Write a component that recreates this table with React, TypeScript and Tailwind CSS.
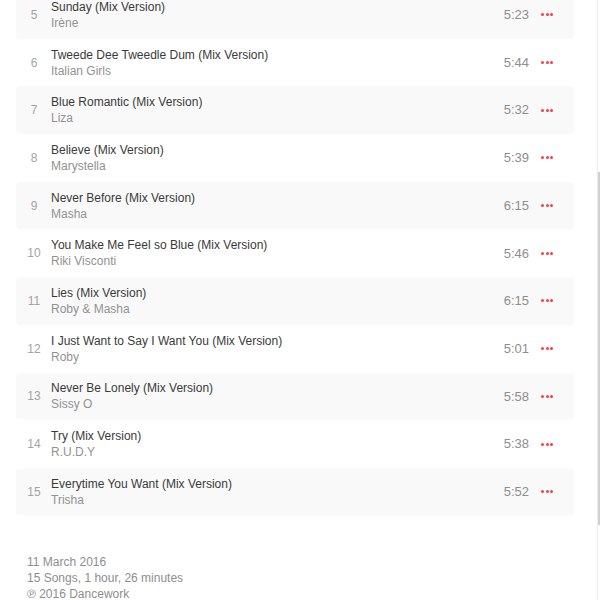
const tracks = [
	{ n: 5, title: "Sunday (Mix Version)", artist: "Irène", time: "5:23" },
	{ n: 6, title: "Tweede Dee Tweedle Dum (Mix Version)", artist: "Italian Girls", time: "5:44" },
	{ n: 7, title: "Blue Romantic (Mix Version)", artist: "Liza", time: "5:32" },
	{ n: 8, title: "Believe (Mix Version)", artist: "Marystella", time: "5:39" },
	{ n: 9, title: "Never Before (Mix Version)", artist: "Masha", time: "6:15" },
	{ n: 10, title: "You Make Me Feel so Blue (Mix Version)", artist: "Riki Visconti", time: "5:46" },
	{ n: 11, title: "Lies (Mix Version)", artist: "Roby & Masha", time: "6:15" },
	{ n: 12, title: "I Just Want to Say I Want You (Mix Version)", artist: "Roby", time: "5:01" },
	{ n: 13, title: "Never Be Lonely (Mix Version)", artist: "Sissy O", time: "5:58" },
	{ n: 14, title: "Try (Mix Version)", artist: "R.U.D.Y", time: "5:38" },
	{ n: 15, title: "Everytime You Want (Mix Version)", artist: "Trisha", time: "5:52" },
]

function Dots() {
	return (
		<div className="flex gap-[1.5px]">
			<span className="w-[3px] h-[3px] rounded-full bg-[#fc3c44]"></span>
			<span className="w-[3px] h-[3px] rounded-full bg-[#fc3c44]"></span>
			<span className="w-[3px] h-[3px] rounded-full bg-[#fc3c44]"></span>
		</div>
	)
}

function App() {
	return (
		<div className="flex w-[600px] h-[600px] overflow-hidden bg-white font-['Liberation_Sans',Arial,sans-serif]">
			<div className="w-[597px] pl-4 pr-[23px]">
				<div className="mt-[-9px]">
					{tracks.map((t, i) => (
						<div
							key={t.n}
							className={
								"h-[47.7px] flex items-center rounded-sm " +
								(i % 2 === 0 ? "bg-[#f9f9f9]" : "bg-white")
							}>
							<div className="ml-[6px] w-[24px] text-center text-[12px] text-[#a3a3a3]">{t.n}</div>
							<div className="ml-[5px] flex-1 leading-4">
								<div className="text-[12px] text-[#3a3a3a]">{t.title}</div>
								<div className="text-[12px] text-[#929292]">{t.artist}</div>
							</div>
							<div className="text-[13px] text-[#8e8e8e]">{t.time}</div>
							<div className="ml-[12px] mr-[21px]">
								<Dots />
							</div>
						</div>
					))}
				</div>
				<div className="mt-[38px] pl-[11px] text-[12px] leading-4 text-[#8e8e8e]">
					<div>11 March 2016</div>
					<div>15 Songs, 1 hour, 26 minutes</div>
					<div>℗ 2016 Dancework</div>
				</div>
			</div>
			<div className="w-[3px] border-l border-[#ececec]">
				<div className="mt-[172px] h-[353px] w-[2px] bg-[#d0d0d0]"></div>
			</div>
		</div>
	)
}

export default App
